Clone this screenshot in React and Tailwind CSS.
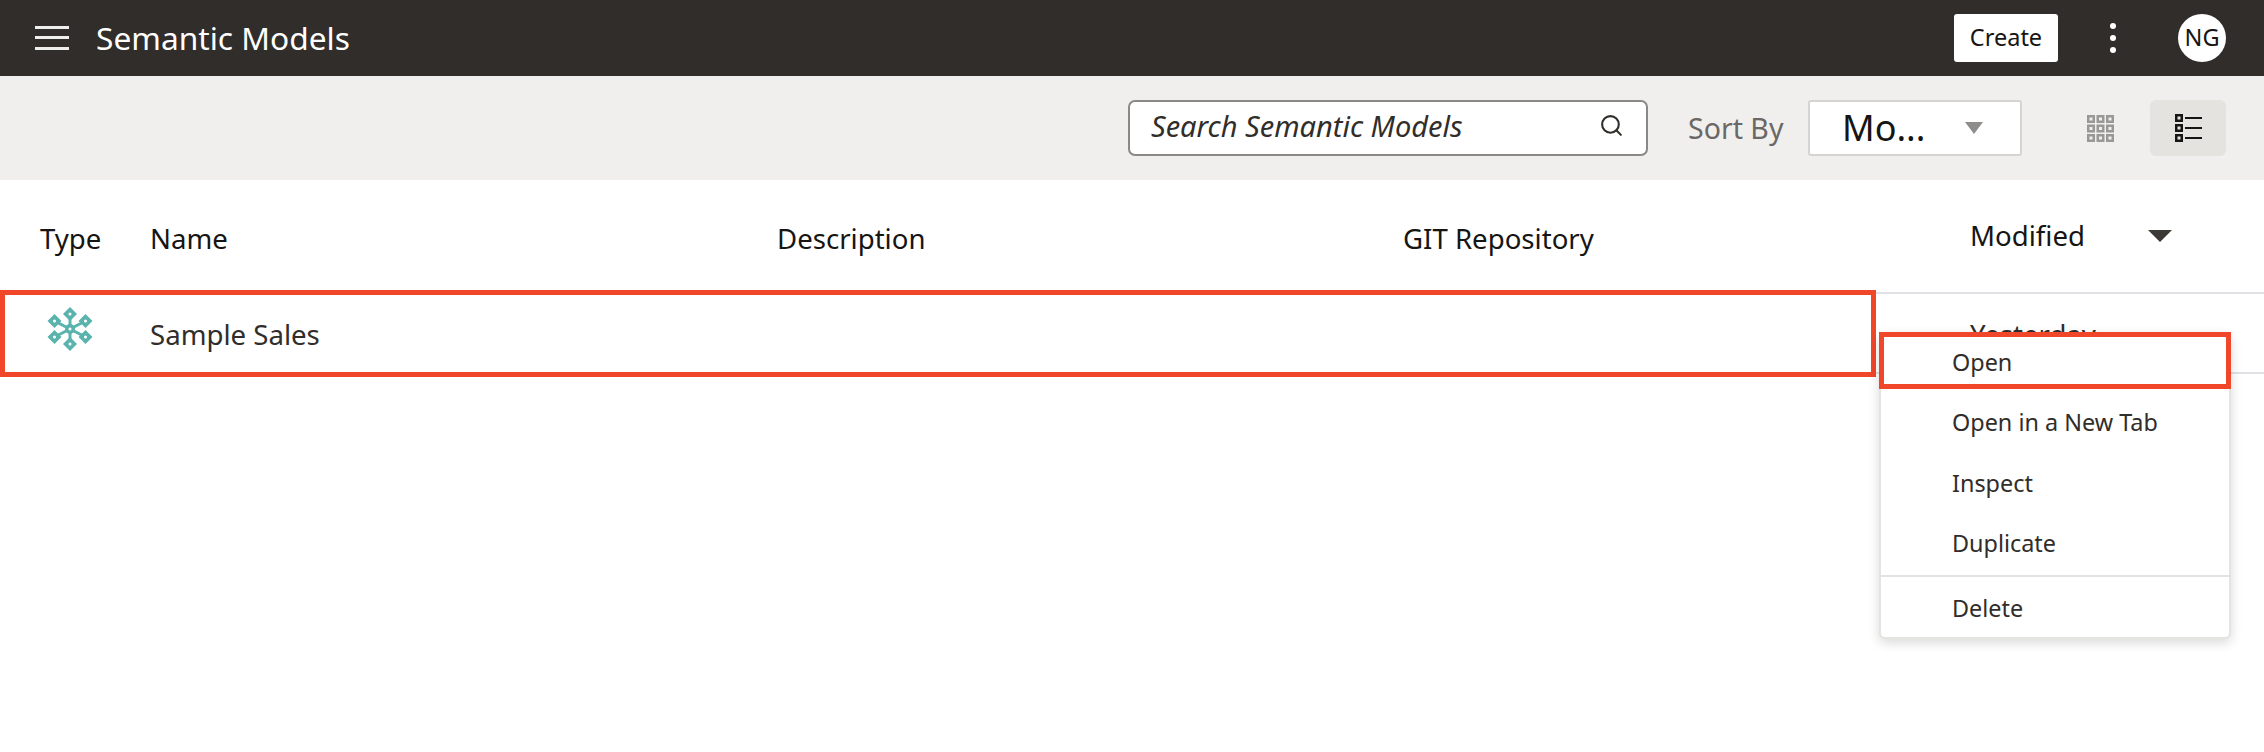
import { Search } from "lucide-react";

function Snowflake() {
  const tips = [
    [23, 7],
    [23, 37],
    [7.5, 14],
    [38.5, 14],
    [7.5, 30],
    [38.5, 30],
  ];
  return (
    <svg width="46" height="44" viewBox="0 0 46 44">
      {tips.map(([x, y]) => (
        <line key={`${x}-${y}`} x1="23" y1="22" x2={x} y2={y} stroke="#5bb3ad" strokeWidth="3" />
      ))}
      {tips.map(([x, y]) => (
        <g key={`d-${x}-${y}`}>
          <polygon points={`${x},${y - 7} ${x + 7},${y} ${x},${y + 7} ${x - 7},${y}`} fill="#5bb3ad" />
          <circle cx={x} cy={y} r="1.5" fill="#fff" />
        </g>
      ))}
      <circle cx="23" cy="22" r="5" fill="#5bb3ad" />
      <circle cx="23" cy="22" r="1.5" fill="#fff" />
    </svg>
  );
}

function GridIcon() {
  const cells = [0, 9.5, 19];
  return (
    <svg width="27" height="27" viewBox="0 0 27 27">
      {cells.flatMap((y) =>
        cells.map((x) => (
          <g key={`${x}-${y}`}>
            <rect x={x} y={y} width="8" height="8" fill="#9a9896" />
            <rect x={x + 2.5} y={y + 2.5} width="3" height="3" fill="#f0efed" />
          </g>
        ))
      )}
    </svg>
  );
}

function ListIcon() {
  const rows = [0, 10, 20];
  return (
    <svg width="27" height="28" viewBox="0 0 27 28">
      {rows.map((y) => (
        <g key={y}>
          <rect x="0" y={y} width="8" height="8" fill="#161513" />
          <rect x="2.5" y={y + 2.5} width="3" height="3" fill="#e4e3df" />
          <rect x="10" y={y + 3} width="17" height="2" fill="#161513" />
        </g>
      ))}
    </svg>
  );
}

export default function App() {
  return (
    <div className="relative min-h-[752px] bg-white overflow-hidden font-['Noto_Sans',sans-serif] text-[#312d2a]">
      <header className="h-[76px] bg-[#312d2a] flex items-center pl-[35px] pr-[38px]">
        <svg width="34" height="24" viewBox="0 0 34 24" className="shrink-0">
          <rect y="0" width="34" height="3" fill="#eeeeec" />
          <rect y="10" width="34" height="3" fill="#eeeeec" />
          <rect y="21" width="34" height="3" fill="#eeeeec" />
        </svg>
        <h1 className="ml-[27px] text-[31.7px] leading-none text-white font-normal -mt-[1px]">Semantic Models</h1>
        <button className="ml-auto w-[104px] h-[48px] bg-white rounded-[3px] text-[23.5px] text-[#161513]">Create</button>
        <div className="ml-[51px] w-[8px] flex flex-col gap-[6px] items-center">
          <span className="w-[6px] h-[6px] rounded-full bg-white" />
          <span className="w-[6px] h-[6px] rounded-full bg-white" />
          <span className="w-[6px] h-[6px] rounded-full bg-white" />
        </div>
        <div className="ml-[61px] w-[48px] h-[48px] rounded-full bg-white flex items-center justify-center text-[23.5px] text-[#161513]">NG</div>
      </header>

      <div className="h-[104px] bg-[#f0efed] flex items-center pr-[38px]">
        <div className="ml-[1128px] w-[520px] h-[56px] bg-white border-2 border-[#8b8886] rounded-[7px] flex items-center pl-[21px] pr-[22px]">
          <span className="italic text-[29px] text-[#312d2a] -mt-[4px]">Search Semantic Models</span>
          <Search size={25} strokeWidth={2} className="ml-auto text-[#312d2a] -mt-[6px]" />
        </div>
        <span className="ml-[40px] text-[28.5px] text-[#6b6764] mt-[1px]">Sort By</span>
        <div className="ml-auto w-[214px] h-[56px] bg-white border-2 border-[#d6d4d0] rounded-[3px] flex items-center pl-[32px]">
          <span className="text-[36px] text-[#161513] leading-none">Mo...</span>
          <span className="ml-[40px] w-0 h-0 border-x-[9px] border-x-transparent border-t-[12px] border-t-[#8f8d8b]" />
        </div>
        <div className="ml-[65px] w-[27px] flex items-center">
          <GridIcon />
        </div>
        <div className="ml-[36px] w-[76px] h-[56px] bg-[#e4e3df] rounded-[6px] flex items-center justify-center">
          <ListIcon />
        </div>
      </div>

      <div className="grid grid-cols-[150px_627px_626px_567px_1fr] h-[114px] pt-[6px] items-center text-[27.6px] text-[#161513] border-b-2 border-[#dfe1e5]">
        <span className="pl-[40px]">Type</span>
        <span>Name</span>
        <span>Description</span>
        <span>GIT Repository</span>
        <span className="flex items-center -mt-[6px] leading-none">
          Modified
          <span className="ml-[63px] w-0 h-0 border-x-[12px] border-x-transparent border-t-[12px] border-t-[#3d3935]" />
        </span>
      </div>

      <div className="grid grid-cols-[150px_627px_626px_567px_1fr] h-[80px] pt-[4px] items-center text-[27.6px] border-b-2 border-[#dfe1e5]">
        <span className="pl-[47px] -mt-[12px]">
          <Snowflake />
        </span>
        <span>Sample Sales</span>
        <span />
        <span />
        <span>Yesterday</span>
      </div>

      {/* annotation around the row */}
      <div className="absolute left-0 top-[290px] w-[1876px] h-[87px] border-[5px] border-[#f0472a]" />

      {/* context menu */}
      <div className="absolute left-[1879px] top-[332px] w-[352px] h-[307px] bg-white border-2 border-[#e4e3df] rounded-[6px] shadow-[0_4px_12px_rgba(0,0,0,0.15)] text-[23.4px] text-[#312d2a]">
        <div className="h-[58px] flex items-center pl-[71px]">Open</div>
        <div className="h-[62px] flex items-center pl-[71px]">Open in a New Tab</div>
        <div className="h-[60px] flex items-center pl-[71px]">Inspect</div>
        <div className="h-[60px] flex items-center pl-[71px]">Duplicate</div>
        <div className="mt-[1px] border-t-2 border-[#e4e3df]" />
        <div className="h-[64px] flex items-center pl-[71px]">Delete</div>
      </div>

      {/* annotation around Open */}
      <div className="absolute left-[1879px] top-[332px] w-[352px] h-[57px] border-[5px] border-[#f0472a]" />
    </div>
  );
}
